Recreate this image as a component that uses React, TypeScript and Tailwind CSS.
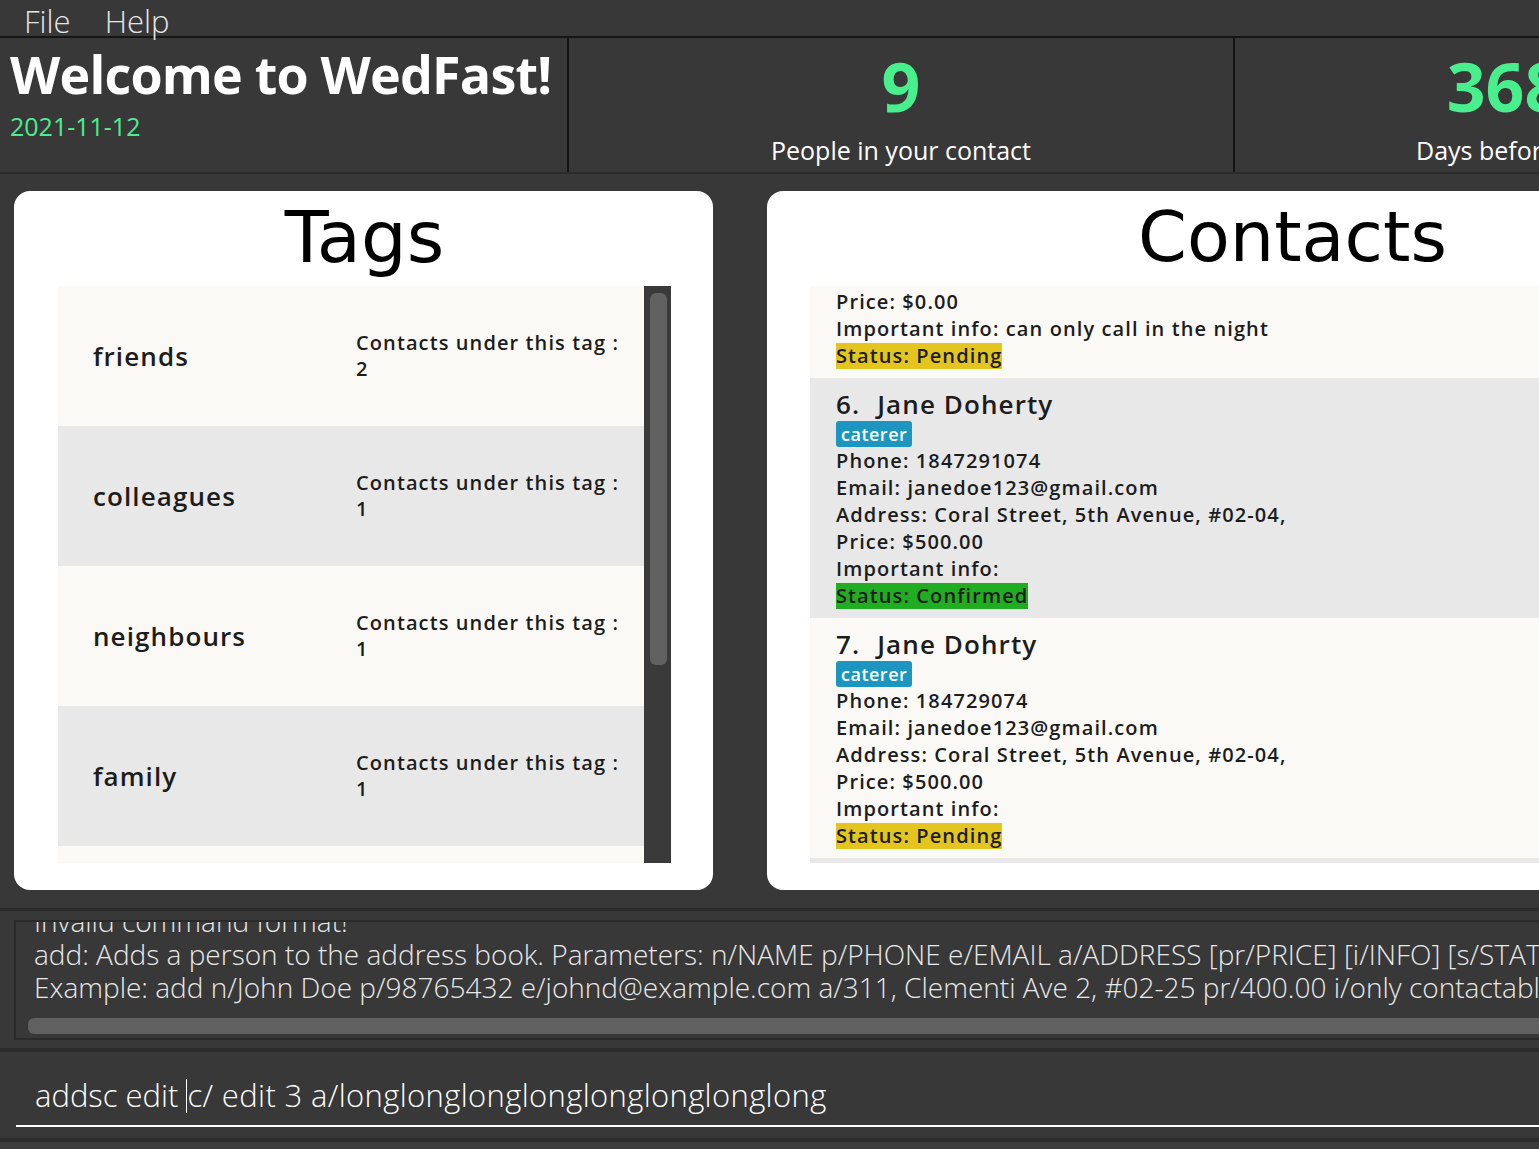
import React from 'react';

const ui = "font-['Open_Sans','Noto_Sans',sans-serif]";
const card = "font-['Open_Sans','Noto_Sans',sans-serif] font-semibold";
const title = "font-['DejaVu_Sans','Verdana',sans-serif]";

const tags = [
  { name: 'friends', count: 2 },
  { name: 'colleagues', count: 1 },
  { name: 'neighbours', count: 1 },
  { name: 'family', count: 1 },
  { name: '', count: 0 },
];

type Contact = {
  no: number;
  name: string;
  tag: string;
  phone: string;
  email: string;
  address: string;
  price: string;
  info: string;
  status: 'Pending' | 'Confirmed';
};

const contacts: Contact[] = [
  {
    no: 6,
    name: 'Jane Doherty',
    tag: 'caterer',
    phone: '1847291074',
    email: 'janedoe123@gmail.com',
    address: 'Coral Street, 5th Avenue, #02-04,',
    price: '$500.00',
    info: '',
    status: 'Confirmed',
  },
  {
    no: 7,
    name: 'Jane Dohrty',
    tag: 'caterer',
    phone: '184729074',
    email: 'janedoe123@gmail.com',
    address: 'Coral Street, 5th Avenue, #02-04,',
    price: '$500.00',
    info: '',
    status: 'Pending',
  },
];

function Status({ value }: { value: 'Pending' | 'Confirmed' }) {
  const bg = value === 'Pending' ? 'bg-[#e4c520]' : 'bg-[#21ad21]';
  return (
    <div className="h-[27px] flex items-center">
      <span className={`${bg} leading-[26px]`}>Status: {value}</span>
    </div>
  );
}

function ContactCard({ c, odd }: { c: Contact; odd: boolean }) {
  return (
    <div className={`${odd ? 'bg-[#faf9f5]' : 'bg-[#e8e8e8]'} pl-[26px] pt-[9px] pb-[9px]`}>
      <div className="h-[34px] flex items-center text-[26px] tracking-[1.1px]">
        <span>{c.no}.</span>
        <span className="ml-[17px]">{c.name}</span>
      </div>
      <div className="h-[26px] flex items-center">
        <span className="bg-[#1b96c1] text-white text-[18px] leading-[26px] px-[5px] rounded-[3px] tracking-[0.5px]">{c.tag}</span>
      </div>
      <div className="leading-[27px]">Phone: {c.phone}</div>
      <div className="leading-[27px]">Email: {c.email}</div>
      <div className="leading-[27px]">Address: {c.address}</div>
      <div className="leading-[27px]">Price: {c.price}</div>
      <div className="leading-[27px]">Important info: {c.info}</div>
      <Status value={c.status} />
    </div>
  );
}

export default function App() {
  return (
    <div className={`w-[1539px] h-[1149px] overflow-hidden bg-[#383838] flex flex-col ${ui}`}>
      {/* menu bar */}
      <div className="h-[38px] shrink-0 flex items-center gap-[34px] pl-[24px] text-[31px] font-light text-[#e6e6e6] border-b-2 border-[#151515]">
        <span className="leading-[36px] pt-[5px]">File</span>
        <span className="leading-[36px] pt-[5px]">Help</span>
      </div>

      {/* header */}
      <div className="h-[136px] shrink-0 flex border-b-2 border-[#2b2b2b] w-[1900px]">
        <div className="w-[569px] shrink-0 border-r-2 border-[#151515] pl-[10px] pt-[4px]">
          <div className="text-[52px] font-bold text-white leading-[64px] tracking-[-0.8px]">Welcome to WedFast!</div>
          <div className="text-[25px] text-[#4aef8d] leading-[32px] mt-[4px]">2021-11-12</div>
        </div>
        <div className="w-[666px] shrink-0 border-r-2 border-[#151515] flex flex-col items-center pt-[6px]">
          <div className="text-[68px] font-bold text-[#4aef8d] leading-[84px]">9</div>
          <div className="text-[25px] text-white leading-[32px] mt-[6px]">People in your contact</div>
        </div>
        <div className="w-[540px] shrink-0 flex flex-col pt-[6px]">
          <div className="text-[68px] font-bold text-[#4aef8d] leading-[84px] text-center">368</div>
          <div className="text-[25px] text-white leading-[32px] mt-[6px] ml-[181px] whitespace-nowrap">Days before the wedding</div>
        </div>
      </div>

      {/* panels */}
      <div className="h-[734px] shrink-0 flex gap-[54px] pl-[14px] pt-[17px] pb-[18px] w-[1900px]">
        <div className="w-[699px] shrink-0 bg-white rounded-[16px] flex flex-col pl-[44px] pr-[42px] pb-[27px]">
          <div className={`h-[95px] shrink-0 text-center text-[72px] leading-[84px] pt-[4px] text-black ${title}`}>Tags</div>
          <div className="flex-1 flex overflow-hidden">
            <div className={`flex-1 flex flex-col ${card} text-[#1c1c1c]`}>
              {tags.map((t, i) => (
                <div
                  key={i}
                  className={`h-[140px] shrink-0 flex items-center ${i % 2 === 0 ? 'bg-[#faf9f5]' : 'bg-[#e8e8e8]'}`}
                >
                  <div className="w-[298px] shrink-0 pl-[35px] text-[26px] tracking-[1.1px]">{t.name}</div>
                  {t.name && (
                    <div className="text-[20px] leading-[26px] tracking-[1.1px]">
                      <div>Contacts under this tag :</div>
                      <div>{t.count}</div>
                    </div>
                  )}
                </div>
              ))}
            </div>
            <div className="w-[27px] shrink-0 bg-[#3a3a3a] pt-[7px] pl-[6px] pr-[4px]">
              <div className="h-[372px] bg-[#616161] rounded-[6px]" />
            </div>
          </div>
        </div>

        <div className="w-[1050px] shrink-0 bg-white rounded-[16px] flex flex-col pl-[43px] pr-[42px] pb-[27px]">
          <div className={`h-[95px] shrink-0 text-center text-[70px] leading-[84px] pt-[4px] text-black ${title}`}>Contacts</div>
          <div className={`flex-1 overflow-hidden bg-[#e8e8e8] ${card} text-[20px] tracking-[1.1px] text-[#1c1c1c]`}>
            <div className="bg-[#faf9f5] pl-[26px] pt-[2px] pb-[9px]">
              <div className="leading-[27px]">Price: $0.00</div>
              <div className="leading-[27px]">Important info: can only call in the night</div>
              <Status value="Pending" />
            </div>
            {contacts.map((c, i) => (
              <ContactCard key={c.no} c={c} odd={i % 2 === 1} />
            ))}
          </div>
        </div>
      </div>

      {/* result display */}
      <div className="h-[140px] shrink-0 border-t-[3px] border-[#2c2c2c] pt-[9px] pl-[14px] pb-[8px]">
        <div className="h-[120px] w-[1700px] border-2 border-[#2a2a2a] overflow-hidden flex flex-col">
          <div className="flex-1 overflow-hidden pl-[18px] text-[28px] font-light text-[#e8e8e8] leading-[33px] whitespace-nowrap">
            <div className="mt-[-17px]">Invalid command format!</div>
            <div>add: Adds a person to the address book. Parameters: n/NAME p/PHONE e/EMAIL a/ADDRESS [pr/PRICE] [i/INFO] [s/STATUS]</div>
            <div>Example: add n/John Doe p/98765432 e/johnd@example.com a/311, Clementi Ave 2, #02-25 pr/400.00 i/only contactable by email</div>
          </div>
          <div className="h-[24px] shrink-0 pl-[12px] pt-[4px] pb-[4px]">
            <div className="h-[16px] bg-[#606060] rounded-[6px]" />
          </div>
        </div>
      </div>

      {/* command box */}
      <div className="h-[90px] shrink-0 border-t-4 border-[#2c2c2c] pl-[16px] pt-[22px]">
        <div className="w-[1600px] border-b-2 border-white h-[53px] flex items-start pl-[19px]">
          <span className="text-[31px] font-light text-white leading-[42px] whitespace-pre">addsc edit </span>
          <span className="w-[1px] h-[34px] bg-white mt-[5px]" />
          <span className="text-[31px] font-light text-white leading-[42px] whitespace-pre tracking-[0.35px]">c/ edit 3 a/longlonglonglonglonglonglonglong</span>
        </div>
      </div>

      <div className="flex-1 border-t-4 border-[#2c2c2c] bg-[#3c3c3c]" />
    </div>
  );
}
